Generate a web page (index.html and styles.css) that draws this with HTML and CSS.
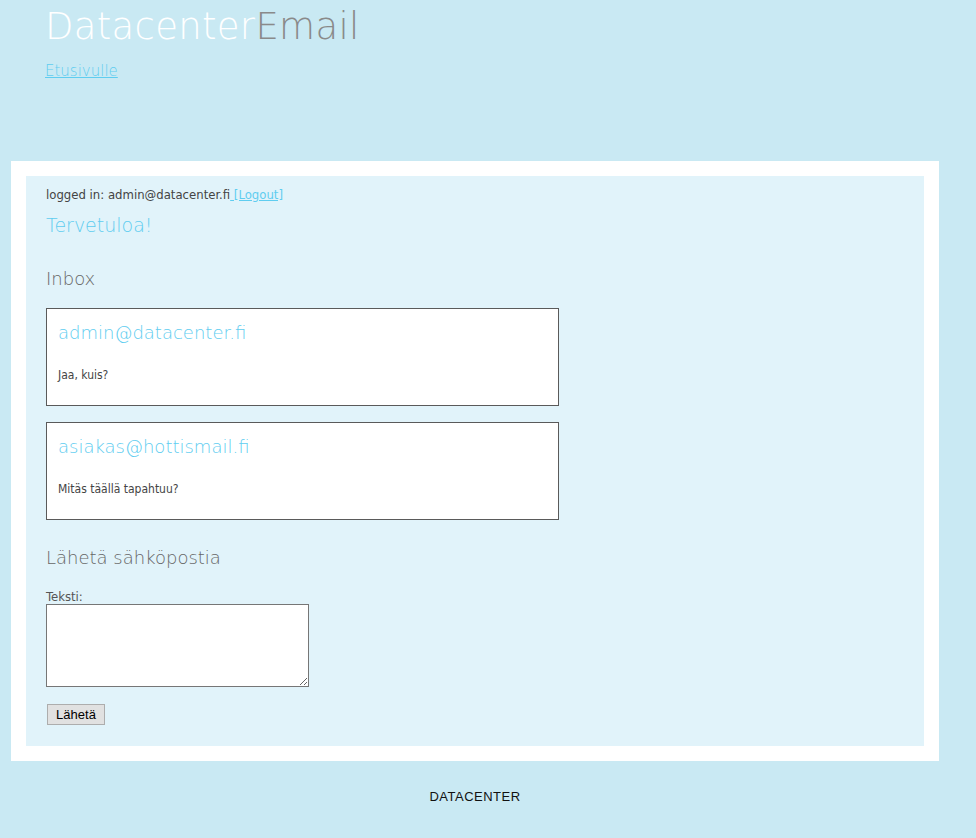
FILE: index.html
```html
<!DOCTYPE html>
<html lang="fi">
<head>
<meta charset="utf-8">
<title>DatacenterEmail</title>
<link rel="stylesheet" href="styles.css">
</head>
<body>
<header class="site-header">
  <h1 class="logo"><span class="logo-a">Datacenter</span><span class="logo-b">Email</span></h1>
  <a class="home-link" href="#">Etusivulle</a>
</header>
<main class="frame">
  <div class="inner">
    <p class="login">logged in: admin@datacenter.fi<a href="#" class="logout"> [Logout]</a></p>
    <h2 class="welcome">Tervetuloa!</h2>
    <h3 class="section-title">Inbox</h3>
    <div class="mail">
      <div class="mail-from">admin@datacenter.fi</div>
      <p class="mail-body">Jaa, kuis?</p>
    </div>
    <div class="mail">
      <div class="mail-from">asiakas@hottismail.fi</div>
      <p class="mail-body">Mitäs täällä tapahtuu?</p>
    </div>
    <h3 class="section-title send-title">Lähetä sähköpostia</h3>
    <form class="send-form">
      <label class="label" for="t">Teksti:</label>
      <textarea id="t" class="textarea"></textarea>
      <button type="button" class="btn">Lähetä</button>
    </form>
  </div>
</main>
<footer class="footer">DATACENTER</footer>
</body>
</html>
```
FILE: styles.css
```css
html, body {
  margin: 0;
  padding: 0;
}
body {
  background: #c9e9f3;
  font-family: "DejaVu Sans Condensed", "DejaVu Sans", sans-serif;
  color: #555;
  width: 976px;
  height: 838px;
  overflow: hidden;
}
.site-header {
  padding: 0 0 0 45px;
  height: 161px;
  box-sizing: border-box;
}
.logo {
  margin: 0;
  padding-top: 4px;
  font-family: "DejaVu Sans", sans-serif;
  font-weight: 200;
  font-size: 37px;
  line-height: 46px;
  letter-spacing: 0.3px;
}
.logo-a { color: #ffffff; }
.logo-b { color: #8a8a8a; }
.home-link {
  display: inline-block;
  margin-top: 12px;
  font-family: "DejaVu Sans", sans-serif;
  font-weight: 200;
  font-size: 15px;
  color: #5fcdf0;
}
.frame {
  display: block;
  margin: 0 37px 0 11px;
  background: #ffffff;
  padding: 15px;
}
.inner {
  background: #e1f3fa;
  padding: 11px 20px 21px 20px;
}
.login {
  margin: 0;
  font-size: 13px;
  line-height: 16px;
  color: #444;
}
.logout {
  color: #5fcdf0;
}
.welcome {
  margin: 10px 0 0 0;
  font-family: "DejaVu Sans", sans-serif;
  font-weight: 200;
  font-size: 19px;
  line-height: 24px;
  color: #5fcdf0;
}
.section-title {
  margin: 30px 0 0 0;
  font-family: "DejaVu Sans", sans-serif;
  font-weight: 200;
  font-size: 18px;
  line-height: 24px;
  color: #666;
}
.mail {
  width: 500px;
  height: 84px;
  background: #fff;
  border: 1px solid #5a5a5a;
  margin-top: 17px;
  padding: 12px 0 0 11px;
  box-sizing: content-box;
}
.mail + .mail {
  margin-top: 16px;
}
.mail-from {
  font-family: "DejaVu Sans", sans-serif;
  font-weight: 200;
  font-size: 18px;
  line-height: 24px;
  color: #5fcdf0;
}
.mail-body {
  margin: 22px 0 0 0;
  font-size: 12px;
  line-height: 16px;
  color: #444;
}
.send-title {
  margin-top: 26px;
}
.send-form {
  margin-top: 20px;
}
.label {
  display: block;
  font-size: 13px;
  line-height: 14px;
  color: #555;
}
.textarea {
  display: block;
  width: 263px;
  height: 83px;
  box-sizing: border-box;
  border: 1px solid #767676;
  margin: 0;
  padding: 2px;
  resize: both;
  background: #fff;
}
.btn {
  display: block;
  margin: 17px 0 0 1px;
  width: 58px;
  height: 21px;
  padding: 0;
  font-family: "Liberation Sans", Arial, sans-serif;
  font-size: 13px;
  color: #000;
  background: #e1e1e1;
  border: 1px solid #adadad;
}
.footer {
  text-align: center;
  width: 928px;
  margin-left: 11px;
  padding-top: 28px;
  font-family: "Liberation Sans", Arial, sans-serif;
  font-size: 13px;
  letter-spacing: 0.5px;
  color: #111;
}
```
